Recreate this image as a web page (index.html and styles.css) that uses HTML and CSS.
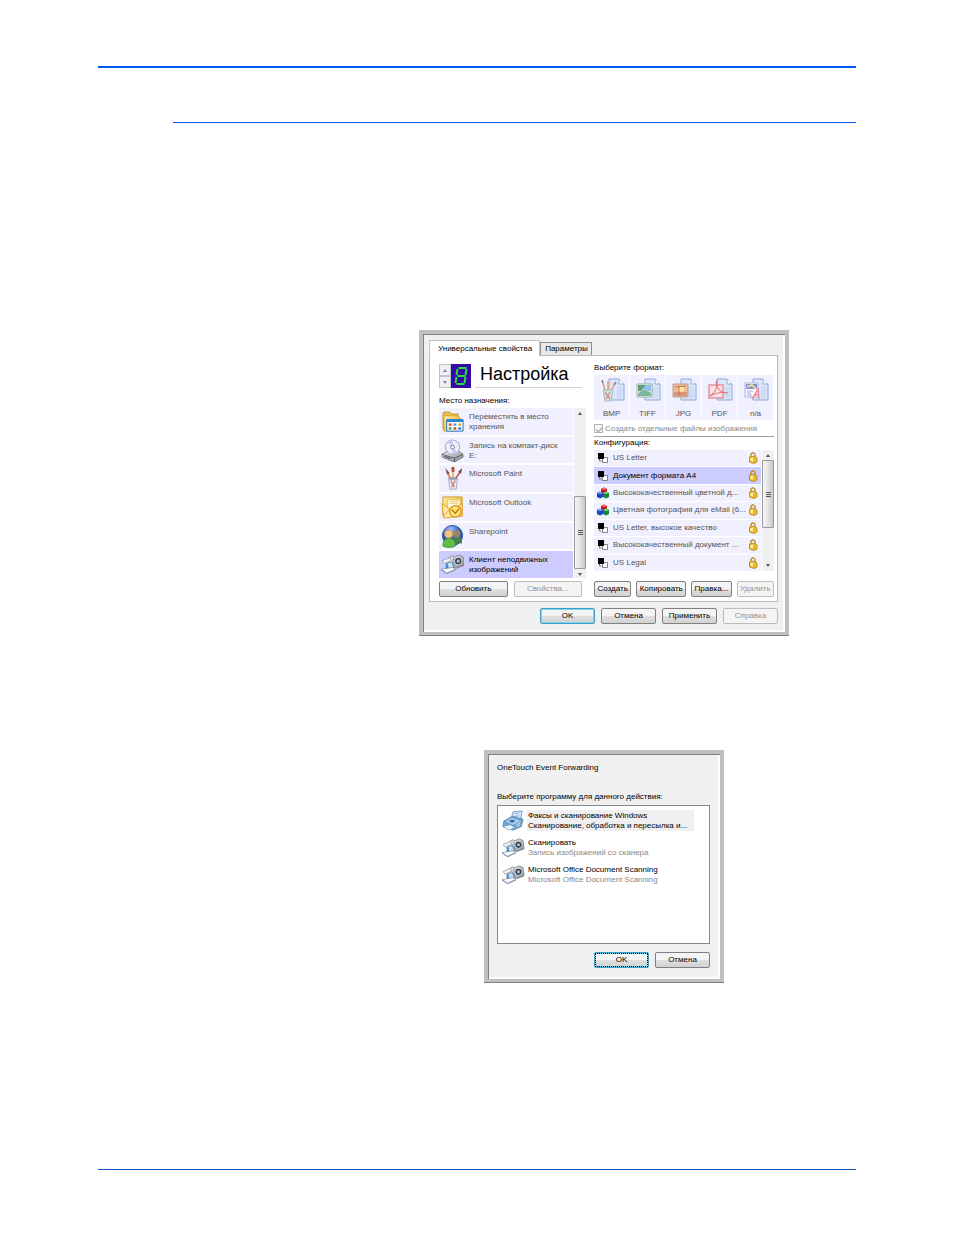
FILE: index.html
```html
<!DOCTYPE html>
<html lang="ru">
<head>
<meta charset="utf-8">
<title>OneTouch</title>
<link rel="stylesheet" href="styles.css">
</head>
<body>
<svg class="defs" aria-hidden="true">
  <defs>
    <linearGradient id="gold" x1="0" y1="0" x2="1" y2="1"><stop offset="0" stop-color="#fff0a0"/><stop offset="1" stop-color="#dfa31b"/></linearGradient>
    <linearGradient id="steel" x1="0" y1="0" x2="1" y2="1"><stop offset="0" stop-color="#f4f6f8"/><stop offset="1" stop-color="#7c838c"/></linearGradient>
    <radialGradient id="globe" cx=".4" cy=".2"><stop offset="0" stop-color="#9fc4ff"/><stop offset="1" stop-color="#2455c0"/></radialGradient>
    <symbol id="i-folder" viewBox="0 0 24 24">
      <path d="M2 20V4l1-2h6l2 2h7v4" fill="#e9bd4a" stroke="#b8892a" stroke-width=".7"/>
      <path d="M3 6h14l3 2-2 14H3z" fill="url(#gold)" stroke="#c2912e" stroke-width=".7"/>
      <path d="M6 10h17v12H6z" fill="#fff" stroke="#1d6fb8"/><path d="M6 9.500h17v3H6z" fill="#2e86cf"/>
      <path d="M8 14h3v2.500H8z" fill="#e34b3a"/><path d="M13 14h3v2.500h-3z" fill="#4b9ee3"/><path d="M18 14h3v2.500h-3z" fill="#e8a03a"/>
      <path d="M8 18h3v2.500H8z" fill="#4aa54a"/><path d="M13 18h3v2.500h-3z" fill="#cf4747"/><path d="M18 18h3v2.500h-3z" fill="#3f78c9"/>
    </symbol>
    <symbol id="i-disc" viewBox="0 0 24 24">
      <path d="M1 16l8-4h9l5 4v3l-9 5-13-5z" fill="url(#steel)" stroke="#555" stroke-width=".6"/>
      <path d="M1 16l13 4 9-4M14 20v4" fill="none" stroke="#444" stroke-width=".8"/>
      <circle cx="12" cy="8.500" r="7.500" fill="#eceefd" stroke="#8e93ad" stroke-width=".8"/>
      <path d="M12 8.500L7 3a7 7 0 0 1 5-2zM12 8.500l5 5.500a7 7 0 0 1-5 2z" fill="#c5c9f2"/>
      <circle cx="12" cy="8.500" r="2" fill="#fff" stroke="#6f7490"/><path d="M3 18l7 2.500" stroke="#333"/>
    </symbol>
    <symbol id="i-paint" viewBox="0 0 24 24">
      <path d="M11 14L6 5" stroke="#e07a45" stroke-width="1.600"/><path d="M4 1l5 5-2 2z" fill="#8a4a2c"/>
      <path d="M12.500 14V4" stroke="#e3b262" stroke-width="1.600"/><path d="M11 0h3v5h-3z" fill="#b9472d"/>
      <path d="M14 14l6-9" stroke="#d84a36" stroke-width="1.600"/><path d="M18 5l4-4-1 6z" fill="#6a4a38"/>
      <path d="M8 12h9l-1 11H9z" fill="#e4ecf5" fill-opacity=".85" stroke="#8c9db1" stroke-width=".8"/>
      <path d="M10 14l4 7M15 14l-4 7" stroke="#d86a6a" stroke-width="1.200"/><ellipse cx="12.500" cy="12" rx="4.500" ry="1" fill="none" stroke="#7c8a9c" stroke-width=".7"/>
    </symbol>
    <symbol id="i-mail" viewBox="0 0 24 24">
      <path d="M2 1h20v20H2z" fill="url(#gold)" stroke="#d6981c"/>
      <path d="M7 4h13v9H7z" fill="#fffbe5" stroke="#e4b949" stroke-width=".8"/><path d="M9 6h9M9 8h9" stroke="#e4b949" stroke-width=".8"/>
      <path d="M1 8l10 7 11-7v13L3 23z" fill="#ffe9a0" stroke="#dba32b"/>
      <path d="M2 22l7-8" fill="none" stroke="#e0a93a"/>
      <circle cx="15" cy="16" r="6" fill="#ffe476" stroke="#d79417" stroke-width="1.300"/><path d="M11 14l4 4 4-5" fill="none" stroke="#b97a12" stroke-width="1.400"/>
    </symbol>
    <symbol id="i-people" viewBox="0 0 24 24">
      <circle cx="12" cy="11" r="10.500" fill="url(#globe)" stroke="#2049a3"/>
      <path d="M12 20c-1-6 1-8 5-8s5 3 5 7z" fill="#477f55"/><circle cx="16.500" cy="9" r="3.800" fill="#9d8564"/>
      <path d="M2 22c0-6 2-8 6.500-8s6.500 2 6.500 8c-4 2-9 2-13 0z" fill="#63bd45" stroke="#388c2c" stroke-width=".8"/><circle cx="8" cy="9.500" r="4.300" fill="#efc27d" stroke="#ac7e40" stroke-width=".6"/>
    </symbol>
    <symbol id="i-scanner" viewBox="0 0 24 24">
      <path d="M8 5l4-2 2 1 5-2 4 2 1 9-8 3-8-3z" fill="url(#steel)" stroke="#6c727b" stroke-width=".7"/>
      <path d="M13 5l1 9" stroke="#7c838c" stroke-width=".8"/><circle cx="18" cy="8.500" r="4" fill="#3c434b" stroke="#d9dde2"/><circle cx="18" cy="8.500" r="1.700" fill="#a9bdd1"/>
      <path d="M1 8l8-3 2 3-8 3z" fill="#eef1f4" stroke="#8b929b" stroke-width=".7"/>
      <path d="M5 11l7-2 2 7-9 2z" fill="#4b86c5"/><path d="M7 11l4-1 2 5-5 1z" fill="#c6e1f5"/>
      <path d="M0 17l12-2 3 2-9 4z" fill="#f8fafc" stroke="#7c848e" stroke-width=".7"/><path d="M0 17v1l6 4 9-4v-1l-9 4z" fill="#7f8cba"/>
    </symbol>
    <symbol id="i-fax" viewBox="0 0 24 24">
      <path d="M10 10l2-8 10-1-2 11z" fill="#d8eafb" stroke="#5381ae" stroke-width=".8"/><path d="M14 4l5-.5M13 7l6-.5" stroke="#82acd3"/>
      <path d="M2 12l9-5 12 3-2 8-9 4-11-4z" fill="#6fa6d4" stroke="#4777a6" stroke-width=".8"/>
      <path d="M4 12l7-3 9 3-8 4z" fill="#b2d6f0"/><path d="M7 12l4-1.500 4 1.500-4 2z" fill="#2c6394"/>
      <path d="M1 18l8-2 5 3-6 3z" fill="#edf6fd" stroke="#6490b9" stroke-width=".7"/><path d="M16 16l4-2M16 18l4-2" stroke="#d8eefa"/>
    </symbol>
    <symbol id="i-bw" viewBox="0 0 12 12"><path d="M6 5.500h4.500v5H5.500v-4z" fill="#fff" stroke="#666" stroke-width=".8"/><path d="M1 1h6v6H1z" fill="#000"/><path d="M2.500 7v2h2" fill="none" stroke="#777"/></symbol>
    <symbol id="i-rgb" viewBox="0 0 12 12">
      <path d="M4 2l3-1.500L10 2v4L7 7.500 4 6z" fill="#b91922"/><path d="M4 2l3-1.500L10 2 7 3.300z" fill="#ff6262"/>
      <path d="M0 6l2.500-1.500L6 6v4l-3 1.500L0 10z" fill="#1645bd"/><path d="M0 6l2.500-1.500L6 6 3 7.300z" fill="#83a8ff"/>
      <path d="M6 6l3-1.500L12 6v4l-3 1.500L6 10z" fill="#168434"/><path d="M6 6l3-1.500L12 6 9 7.300z" fill="#72d77c"/>
    </symbol>
    <symbol id="i-lock" viewBox="0 0 10 12"><path d="M3 5V3.500a2 2 0 0 1 4-1V5" fill="none" stroke="#b58a22" stroke-width="1.300"/><path d="M1.500 5l5-1L9 6v4l-3 1.500L1.500 10z" fill="#eab92c" stroke="#b58516" stroke-width=".8"/><path d="M2.500 6l2.500-.5v4l-2.500-.5z" fill="#fff19e"/></symbol>
    <symbol id="i-page" viewBox="0 0 26 26"><path d="M10 2h10l5 5v16H10z" fill="#dbe6fa" stroke="#91a9dc"/><path d="M20 2v5h5" fill="#fff" stroke="#91a9dc"/><path d="M18 10h5v11h-5z" fill="#cfdcf5"/></symbol>
    <symbol id="i-bmp" viewBox="0 0 26 26"><use href="#i-page"/><path d="M7 17L4 6M9 17V4M11 17l4-9" stroke="#e0a88c" stroke-width="1.800"/><path d="M4 6L3 3M15 8l2-3" stroke="#9a8781" stroke-width="1.800"/><path d="M4 13h10l-2 11H6z" fill="#cfe3d6" stroke="#abb7cd"/><path d="M6 15l5 7M11 15l-4 7" stroke="#dc9292" stroke-width="1.500"/></symbol>
    <symbol id="i-tiff" viewBox="0 0 26 26"><use href="#i-page"/><path d="M2 7h15v13H2z" fill="#fff" stroke="#8eaaa9"/><path d="M3 8h13v6H3z" fill="#8dc4e9"/><path d="M3 14h13v5H3z" fill="#f0deb0"/><path d="M3 17c4-5 8-4 13-1v3H3z" fill="#78b79b"/><path d="M3 8h7c0 3-3 3-4 6H3z" fill="#609c76"/></symbol>
    <symbol id="i-jpg" viewBox="0 0 26 26"><use href="#i-page"/><path d="M2 7h15v13H2z" fill="#f0b991" stroke="#b5a29e"/><path d="M3 15h13v4H3z" fill="#d99576"/><circle cx="10" cy="12" r="3" fill="#ffe49e"/><path d="M4 10l11-1M8 9v10" stroke="#ae7768"/></symbol>
    <symbol id="i-pdf" viewBox="0 0 26 26"><use href="#i-page"/><path d="M2 8h14v13H2z" fill="#f8e3ea" stroke="#e4929a" stroke-width="1.500"/><path d="M3 19c5-3 8-9 7-15-2 2 0 12 11 12-6-2-12 0-18 3" fill="none" stroke="#e77780" stroke-width="1.100"/></symbol>
    <symbol id="i-na" viewBox="0 0 26 26"><use href="#i-page"/><path d="M2 6h13v14H2z" fill="#fff" stroke="#a8b0e3"/><path d="M3 7h11v5H3z" fill="#7d8bdc"/><path d="M4 10l5-2 4 4" fill="none" stroke="#e8d98e" stroke-width="2"/><path d="M4 14h6M4 16h4M4 18h5" stroke="#9ba5df"/><path d="M9 22l6-10 1 10M11 18h5" fill="none" stroke="#ee8f9b" stroke-width="1.500"/></symbol>
  </defs>
</svg>
<div class="sheet">
  <header class="head"><hr class="rule-main"><hr class="rule-sub"></header>
  <main class="content">
    <section class="dialog props">
      <nav class="tabs"><button class="tab active">Универсальные свойства</button><button class="tab">Параметры</button></nav>
      <div class="panel">
        <div class="left">
          <div class="title-row">
            <div class="spin"><button aria-label="Вверх"><i class="up"></i></button><button aria-label="Вниз"><i class="down"></i></button></div>
            <svg class="digit" viewBox="0 0 19 24"><g fill="none" stroke="#25e03c" stroke-width="2"><path d="M7 4h8M6 12h8M5 20h8M6 5l-1 6M15 5l-1 6M5 13l-1 6M14 13l-1 6"/></g></svg>
            <h1>Настройка</h1>
          </div>
          <p class="label dest-label">Место назначения:</p>
          <div class="scroller">
            <ul class="dest">
              <li><svg><use href="#i-folder"/></svg><span>Переместить в место хранения</span></li>
              <li><svg><use href="#i-disc"/></svg><span>Запись на компакт-диск E:</span></li>
              <li><svg><use href="#i-paint"/></svg><span>Microsoft Paint</span></li>
              <li><svg><use href="#i-mail"/></svg><span>Microsoft Outlook</span></li>
              <li><svg><use href="#i-people"/></svg><span>Sharepoint</span></li>
              <li class="selected"><svg><use href="#i-scanner"/></svg><span>Клиент неподвижных изображений</span></li>
            </ul>
            <div class="bar low"><i class="up"></i><div class="track"><div class="thumb"></div></div><i class="down"></i></div>
          </div>
          <div class="buttons pair"><button class="btn">Обновить</button><button class="btn" disabled>Свойства...</button></div>
        </div>
        <div class="right">
          <p class="label">Выберите формат:</p>
          <div class="formats">
            <button class="format"><svg><use href="#i-bmp"/></svg>BMP</button>
            <button class="format"><svg><use href="#i-tiff"/></svg>TIFF</button>
            <button class="format"><svg><use href="#i-jpg"/></svg>JPG</button>
            <button class="format"><svg><use href="#i-pdf"/></svg>PDF</button>
            <button class="format"><svg><use href="#i-na"/></svg>n/a</button>
          </div>
          <label class="check"><input type="checkbox" checked disabled>Создать отдельные файлы изображения</label>
          <p class="label conf-label">Конфигурация:</p>
          <div class="scroller">
            <ul class="conf">
              <li><svg class="mode"><use href="#i-bw"/></svg><span>US Letter</span><svg class="lock"><use href="#i-lock"/></svg></li>
              <li class="selected"><svg class="mode"><use href="#i-bw"/></svg><span>Документ формата A4</span><svg class="lock"><use href="#i-lock"/></svg></li>
              <li><svg class="mode"><use href="#i-rgb"/></svg><span>Высококачественный цветной д...</span><svg class="lock"><use href="#i-lock"/></svg></li>
              <li><svg class="mode"><use href="#i-rgb"/></svg><span>Цветная фотография для eMail (6...</span><svg class="lock"><use href="#i-lock"/></svg></li>
              <li><svg class="mode"><use href="#i-bw"/></svg><span>US Letter, высокое качество</span><svg class="lock"><use href="#i-lock"/></svg></li>
              <li><svg class="mode"><use href="#i-bw"/></svg><span>Высококачественный документ ...</span><svg class="lock"><use href="#i-lock"/></svg></li>
              <li><svg class="mode"><use href="#i-bw"/></svg><span>US Legal</span><svg class="lock"><use href="#i-lock"/></svg></li>
            </ul>
            <div class="bar high"><i class="up"></i><div class="track"><div class="thumb"></div></div><i class="down"></i></div>
          </div>
          <div class="buttons quad"><button class="btn">Создать</button><button class="btn">Копировать</button><button class="btn">Правка...</button><button class="btn" disabled>Удалить</button></div>
        </div>
      </div>
      <div class="buttons actions"><button class="btn default">OK</button><button class="btn">Отмена</button><button class="btn">Применить</button><button class="btn" disabled>Справка</button></div>
    </section>

    <section class="dialog event">
      <p class="label">OneTouch Event Forwarding</p>
      <p class="label prompt">Выберите программу для данного действия:</p>
      <ul class="programs">
        <li class="current"><svg><use href="#i-fax"/></svg><div><b>Факсы и сканирование Windows</b><span>Сканирование, обработка и пересылка и...</span></div></li>
        <li><svg><use href="#i-scanner"/></svg><div><b>Сканировать</b><span>Запись изображений со сканера</span></div></li>
        <li><svg><use href="#i-scanner"/></svg><div><b>Microsoft Office Document Scanning</b><span>Microsoft Office Document Scanning</span></div></li>
      </ul>
      <div class="buttons actions"><button class="btn default focused">OK</button><button class="btn">Отмена</button></div>
    </section>
  </main>
  <footer><hr class="rule-foot"></footer>
</div>
</body>
</html>
```
FILE: styles.css
```css
* { box-sizing: border-box; }
body { margin: 0; background: #fff; color: #000; font: 8px/10px "Liberation Sans", Arial, sans-serif; }
button { font: inherit; color: inherit; margin: 0; padding: 0; white-space: nowrap; }
p, h1, ul { margin: 0; padding: 0; list-style: none; }
hr { margin: 0; border: 0; }
.defs { position: absolute; width: 0; height: 0; }
.sheet { display: flex; flex-direction: column; min-height: 100vh; padding: 66px 98px 65px; }
.rule-main { height: 2px; background: #005af0; }
.rule-sub { height: 1px; margin: 54px 0 0 75px; background: #005af0; }
.rule-foot { height: 1px; background: #0f55c8; }
.content { flex: 1; padding: 207px 0 0 321px; }

.dialog { display: flex; flex-direction: column; max-width: 100%; background: #f0f0f0; border: 4px solid #c0c0c0; border-bottom-width: 3px; box-shadow: inset 1px 1px #808080, inset -2px -2px #fff, 0 1px #808080; }
.props { width: 370px; padding: 6px 7px 8px 6px; }
.tabs { display: flex; align-items: flex-end; }
.tab { height: 13px; padding: 0 3px 0 4px; border: 1px solid #8c8e94; border-bottom: 0; background: #e8e8e8; }
.tab.active { height: 16px; margin-bottom: -1px; padding: 0 7px 0 8px; border-color: #c4c6ca; background: #fff; z-index: 1; }
.panel { display: flex; gap: 8px; padding: 7px 3px 4px 9px; background: #fff; border: 1px solid #b8bac0; }
.left { flex: 148; min-width: 0; }
.right { flex: 181; min-width: 0; }

.title-row { display: flex; padding-top: 1px; }
.spin { display: flex; flex-direction: column; width: 12px; }
.spin button { display: grid; place-items: center; height: 12px; background: #f0f0f4; border: 1px solid #bfc3cb; }
.digit { width: 20px; height: 24px; background: #3409a5; }
.title-row h1 { flex: 1; margin: 0 4px; padding-left: 5px; border-bottom: 1px solid #d0d0d0; font-size: 18px; line-height: 21px; font-weight: normal; }
.dest-label { margin: 8px 0 2px; }
.up, .down { display: block; width: 0; height: 0; margin: 0 auto; border: 2px solid transparent; }
.up { border-top: 0; border-bottom: 3px solid #555; }
.down { border-bottom: 0; border-top: 3px solid #555; }
.spin .up { border-bottom-color: #6d86b5; }
.spin .down { border-top-color: #6d86b5; }

.scroller { display: flex; gap: 1px; }
.scroller ul { flex: 1; min-width: 0; display: flex; flex-direction: column; }
.dest { height: 170px; gap: 2px; color: #555; }
.dest li { flex: 1; min-height: 0; display: flex; gap: 5px; padding: 2px 0 0 2px; background: #f0f0ff; }
.dest svg { flex: none; width: 23px; height: 23px; }
.dest span { padding-top: 2px; padding-right: 6px; }
.scroller .selected { background: #ccccff; color: #000; }
.bar { display: flex; flex-direction: column; width: 12px; padding: 4px 0; background: #f0f0f2; }
.track { flex: 1; display: flex; flex-direction: column; margin: 3px 0 4px; }
.low .track { justify-content: flex-end; }
.low { padding-bottom: 2px; }
.thumb { display: grid; place-items: center; width: 12px; height: 73px; border: 1px solid #999; border-radius: 1px; background: linear-gradient(90deg, #f6f6f6, #e4e4e6 50%, #c8c8cc); }
.thumb::after { content: ""; width: 5px; height: 5px; background: repeating-linear-gradient(#555 0 1px, transparent 1px 2px); }
.high .thumb { height: 68px; }

.buttons { display: flex; }
.btn { height: 16px; border: 1px solid #808080; border-radius: 2px; background: linear-gradient(#f4f4f4 0 50%, #dfdfdf 50%, #d2d2d2); }
.btn:disabled { color: #939393; border-color: #bcbcbc; background: #f4f4f4; }
.pair { gap: 6px; margin: 3px 4px 0 0; }
.pair .btn { flex: 1; }

.formats { display: grid; grid-template-columns: repeat(5, 1fr); gap: 1px; margin: 2px 1px 0 0; }
.format { display: flex; flex-direction: column; align-items: center; gap: 6px; height: 45px; padding-top: 2px; border: 0; background: #f0f0ff; color: #555; }
.format svg { width: 26px; height: 26px; }
.check { display: flex; align-items: center; gap: 2px; height: 17px; padding-top: 1px; border-bottom: 1px solid #a0a0a0; color: #888; white-space: nowrap; }
.check input { appearance: none; display: grid; place-items: center; width: 9px; height: 9px; margin: 0; border: 1px solid #b4b4b4; background: #f6f6f6; }
.check input::after { content: ""; width: 3px; height: 5px; border: solid #999; border-width: 0 1px 1px 0; rotate: 40deg; }
.conf-label { margin: 1px 0 2px; }
.conf { height: 121px; gap: 1px; color: #555; }
.conf li { flex: 1; display: flex; align-items: center; padding: 0 3px; background: #f0f0ff; }
.conf span { flex: 1; padding-left: 4px; white-space: nowrap; }
.mode { width: 12px; height: 12px; }
.lock { width: 10px; height: 12px; }
.quad { gap: 5px; margin-top: 10px; }
.quad .btn { flex: 1 1 auto; }
.actions { justify-content: flex-end; gap: 6px; margin-top: 6px; }
.actions .btn { width: 55px; }
.btn.default { border-color: #3c9fc5; box-shadow: inset 0 0 0 1px #7fd4ee; }
.btn.focused { outline: 1px dotted #000; outline-offset: -2px; }

.event { width: 240px; margin: 115px 0 0 65px; padding: 9px 10px 11px 9px; }
.prompt { margin-top: 19px; }
.programs { height: 139px; margin-top: 3px; padding: 4px 3px; background: #fff; border: 1px solid #828790; }
.programs li { display: flex; gap: 2px; height: 27px; color: #888; }
.programs li.current { color: #000; }
.programs svg { flex: none; width: 24px; height: 22px; }
.programs div { height: 21px; padding: 1px 1px 0; }
.programs b, .programs span { display: block; font-weight: normal; white-space: nowrap; }
.programs b { color: #000; }
.programs .current div { flex: 1; margin-right: 12px; background: #f0f0f0; }
.event .actions { margin-top: 8px; }
```
